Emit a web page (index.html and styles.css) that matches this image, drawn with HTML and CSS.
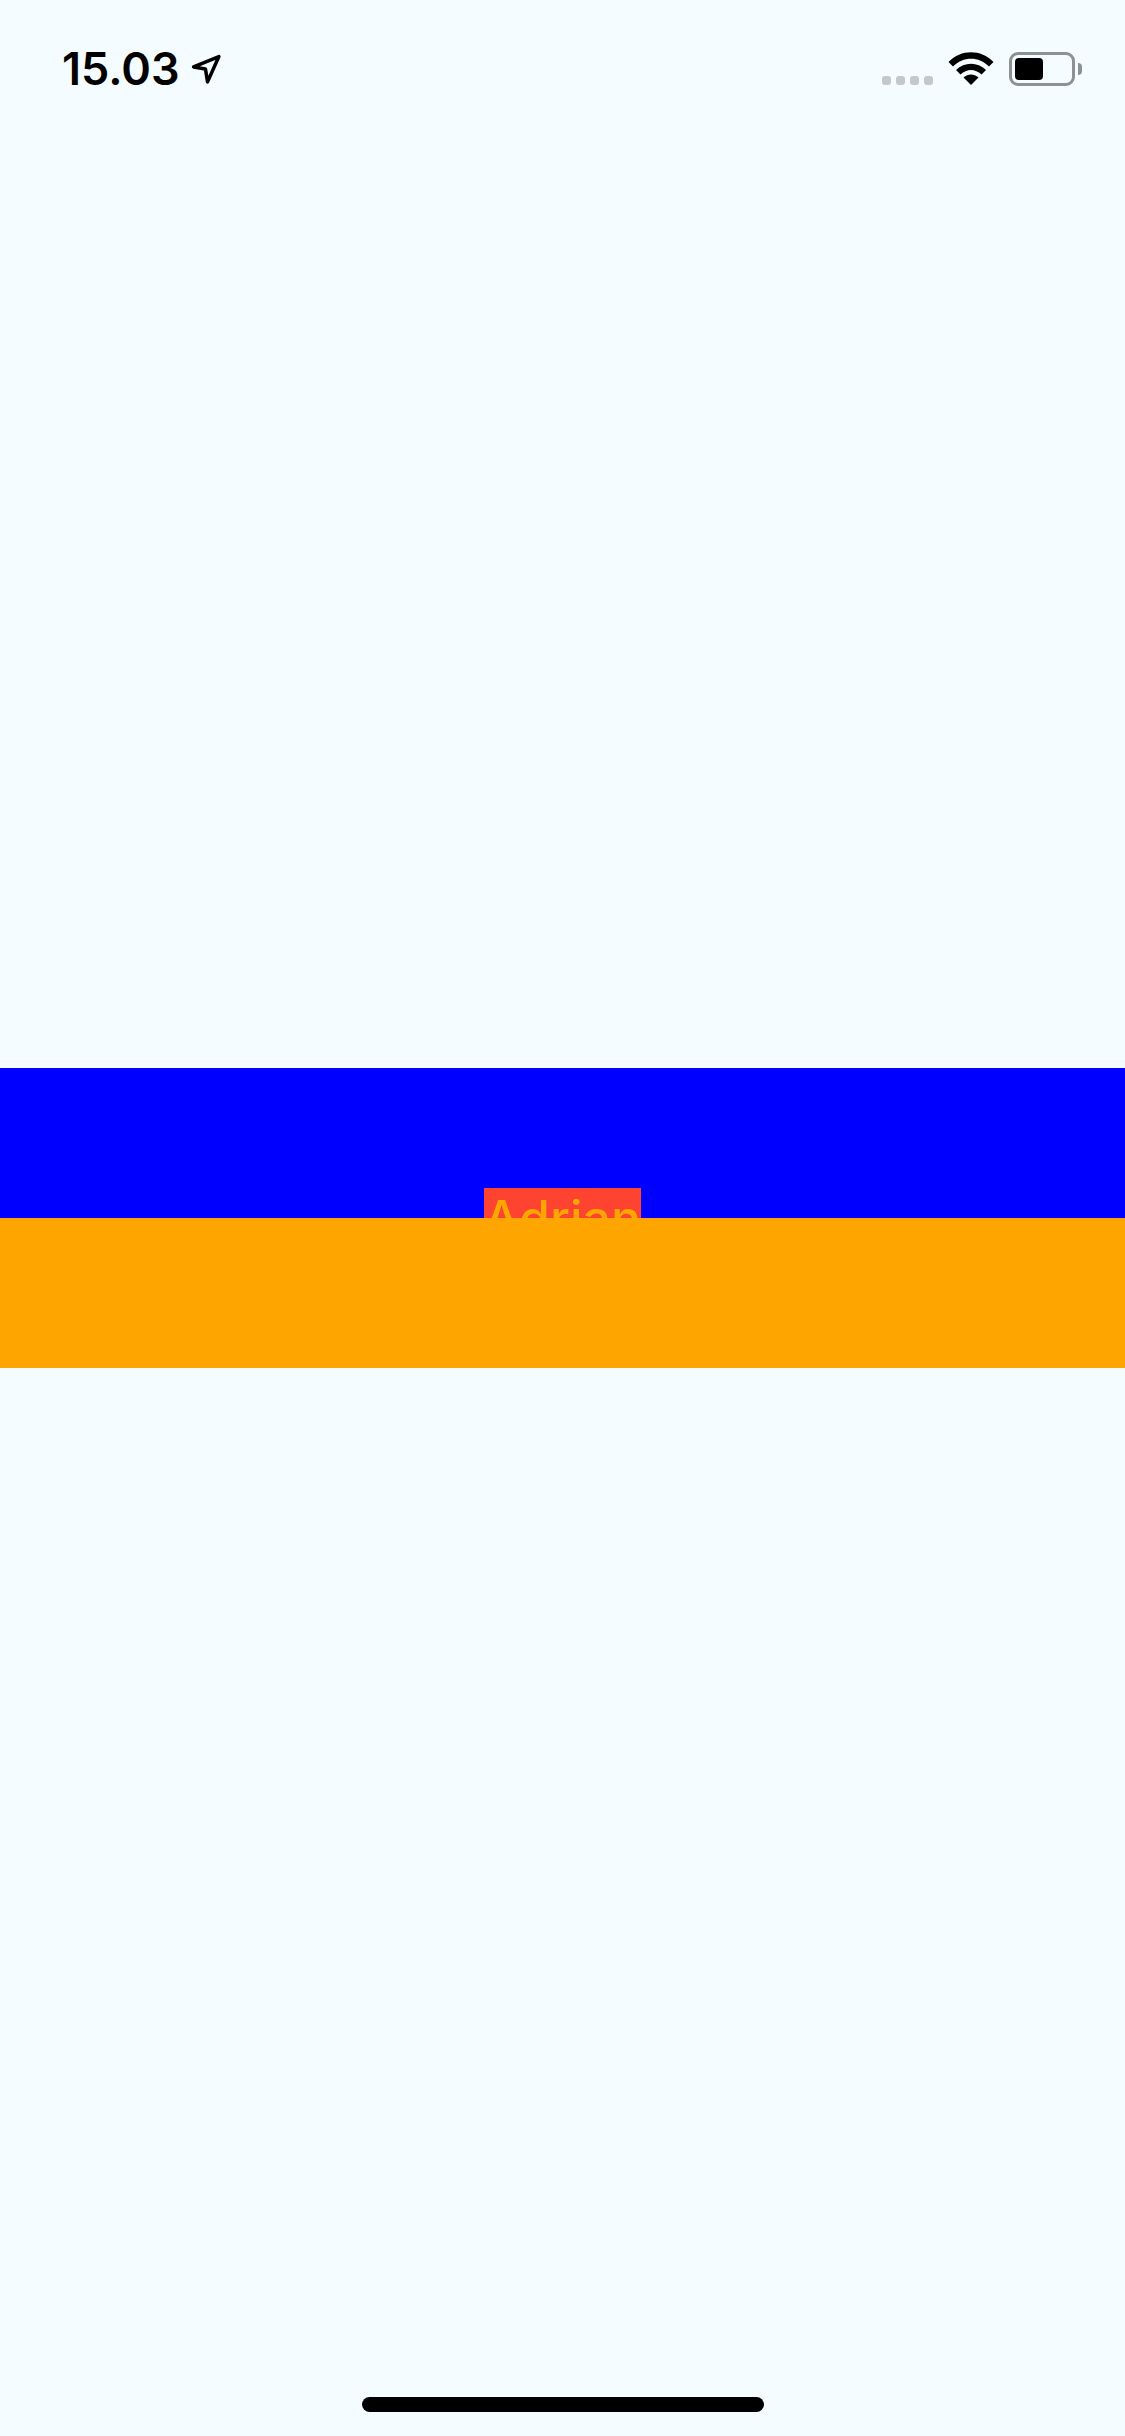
FILE: index.html
```html
<!DOCTYPE html>
<html lang="en">
  <head>
    <meta charset="UTF-8" />
    <meta name="viewport" content="width=device-width, initial-scale=1.0" />
    <title>Adrian</title>
    <link rel="stylesheet" href="styles.css">
  </head>

  <body>
    <div class="status-bar">
      <div class="status-left">
        <span class="clock">15.03</span>
        <svg class="location-icon" width="31" height="31" viewBox="0 0 30 30">
          <path d="M2.500 12.500 L27 2.500 L16 27 L14 14.500 Z" fill="none" stroke="#000" stroke-width="3.400" stroke-linejoin="round" />
        </svg>
      </div>
      <div class="status-right">
        <div class="signal">
          <span class="dot"></span>
          <span class="dot"></span>
          <span class="dot"></span>
          <span class="dot"></span>
        </div>
        <svg class="wifi-icon" width="46" height="34" viewBox="0 0 46 34">
          <path d="M0.500 10 C13 -3 33 -3 45.500 10 L41 14.500 C31 4 15 4 5 14.500 Z" />
          <path d="M8 18 C16.500 9.500 29.500 9.500 38 18 L33.500 22.500 C27 16.500 19 16.500 12.500 22.500 Z" />
          <path d="M15.500 25.500 C20 21.500 26 21.500 30.500 25.500 L23 33 Z" />
        </svg>
        <div class="battery">
          <div class="battery-level"></div>
        </div>
        <div class="battery-cap"></div>
      </div>
    </div>

    <div class="content">
      <div class="band band-blue">
        <div class="name-label">Adrian</div>
      </div>
      <div class="band band-orange"></div>
    </div>

    <div class="home-area">
      <div class="home-indicator"></div>
    </div>
  </body>
</html>
```

FILE: styles.css
```css
body {
  display: flex;
  flex-direction: column;
  height: 2436px;
  margin: 0;
  background-color: #f5fcff;
  font-family: Inter, "Liberation Sans", sans-serif;
  overflow: hidden;
}

/* Status bar */
.status-bar {
  display: flex;
  justify-content: space-between;
  align-items: flex-start;
  height: 132px;
  padding: 0 43px 0 62px;
  box-sizing: border-box;
}

.status-left {
  display: flex;
  align-items: center;
  gap: 11px;
  padding-top: 42px;
}

.clock {
  font-size: 45px;
  font-weight: 600;
  line-height: 54px;
  color: #000;
}

.status-right {
  display: flex;
  align-items: center;
  padding-top: 52px;
}

.signal {
  display: flex;
  gap: 5px;
  margin-top: 23px;
  margin-right: 15px;
}

.dot {
  width: 9px;
  height: 9px;
  border-radius: 3px;
  background-color: #c4c8ca;
}

.wifi-icon {
  margin-right: 15px;
}

.battery {
  width: 66px;
  height: 34px;
  padding: 3px;
  box-sizing: border-box;
  border: 3px solid #8e9193;
  border-radius: 9px;
}

.battery-level {
  width: 28px;
  height: 100%;
  border-radius: 4px;
  background-color: #000;
}

.battery-cap {
  width: 4px;
  height: 12px;
  margin-left: 3px;
  border-radius: 0 4px 4px 0;
  background-color: #8e9193;
}

/* Middle bands */
.content {
  flex: 1;
  display: flex;
  flex-direction: column;
  justify-content: center;
}

.band {
  height: 150px;
}

.band-blue {
  display: flex;
  justify-content: center;
  align-items: flex-end;
  background-color: #0000ff;
}

.band-orange {
  position: relative;
  background-color: #ffa500;
}

.name-label {
  margin-bottom: -30px;
  font-size: 50px;
  font-weight: 500;
  line-height: 60px;
  color: #ffa500;
  background-color: #ff4331;
}

/* Home indicator */
.home-area {
  display: flex;
  justify-content: center;
  align-items: flex-end;
  height: 132px;
  padding-bottom: 24px;
  box-sizing: border-box;
}

.home-indicator {
  width: 402px;
  height: 15px;
  border-radius: 8px;
  background-color: #000;
}
```
